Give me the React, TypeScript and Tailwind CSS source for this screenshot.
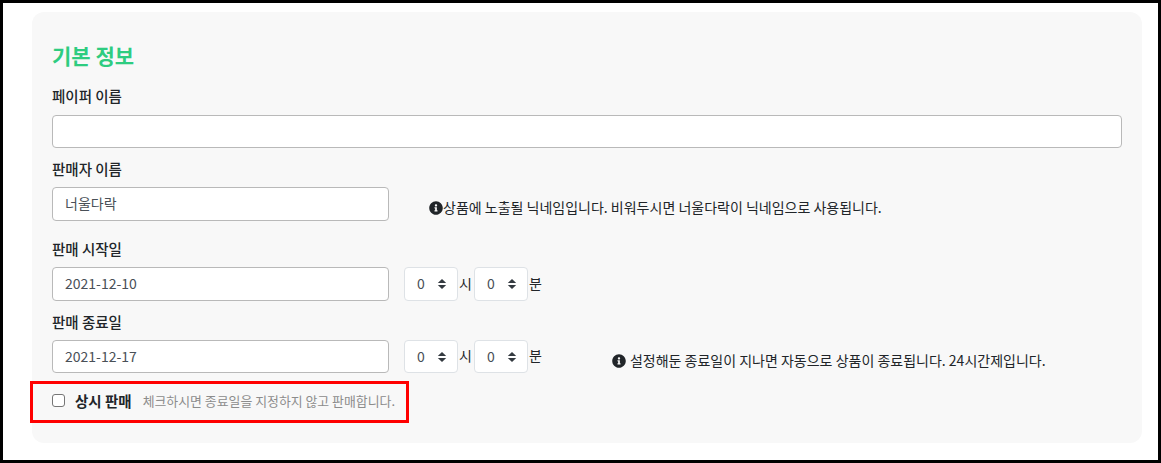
import React from "react";

const font = { fontFamily: '"Noto Sans CJK KR", "Noto Sans", sans-serif' };

function InfoIcon() {
  return (
    <svg viewBox="0 0 512 512" className="w-[14px] h-[14px] shrink-0" fill="#212529">
      <path d="M256 8C119 8 8 119 8 256s111 248 248 248 248-111 248-248S393 8 256 8zm0 110c23.2 0 42 18.800 42 42s-18.800 42-42 42-42-18.800-42-42 18.800-42 42-42zm56 254c0 6.600-5.400 12-12 12h-88c-6.600 0-12-5.400-12-12v-24c0-6.600 5.400-12 12-12h12v-64h-12c-6.600 0-12-5.400-12-12v-24c0-6.600 5.400-12 12-12h64c6.600 0 12 5.400 12 12v100h12c6.600 0 12 5.400 12 12v24z" />
    </svg>
  );
}

function Arrows() {
  return (
    <svg viewBox="0 0 16 16" className="w-[16px] h-[16px]" fill="#343a40">
      <path d="M3.800 7 8 3l4.200 4z" />
      <path d="M3.800 9 8 13l4.200-4z" />
    </svg>
  );
}

function TimeSelect({ short }: { short?: boolean }) {
  return (
    <div className={`w-[54px] ${short ? "h-[33px]" : "h-[34px]"} bg-white border border-[#dee2e6] rounded-[4px] flex items-center justify-between pl-[12px] pr-[7px] text-[14px] text-[#495057]`}>
      <span className={short ? "mt-0" : "-mt-[1px]"}>0</span>
      <Arrows />
    </div>
  );
}

function TextField({ value, className }: { value?: string; className: string }) {
  return (
    <div className={`bg-white border border-[#b9b9b9] rounded-[4px] flex items-center px-[12px] text-[14px] text-[#495057] ${className}`}>
      {value}
    </div>
  );
}

function Label({ children }: { children: React.ReactNode }) {
  return <div className="h-[21px] leading-[21px] text-[14.5px] font-medium text-[#212529]">{children}</div>;
}

function TimeGroup({ short }: { short?: boolean }) {
  return (
    <div className="flex items-center ml-[15px] text-[14px] text-[#212529]">
      <TimeSelect short={short} />
      <span className="w-[16px] pl-[1px] -mt-[2px]">시</span>
      <TimeSelect short={short} />
      <span className="pl-[1px] -mt-[2px]">분</span>
    </div>
  );
}

export default function App() {
  return (
    <div style={font} className="w-[1161px] h-[463px] bg-white border-[3px] border-black overflow-hidden">
      <div className="relative mt-[9px] ml-[29px] w-[1110px] h-[431px] bg-[#f8f8f8] rounded-[12px] pl-[20px] pr-[20px] pt-[28px]">
        <h2 className="h-[30px] leading-[30px] text-[21px] font-bold text-[#2ecc80]">기본 정보</h2>
        <div className="mt-[15px]">
          <Label>페이퍼 이름</Label>
        </div>
        <TextField className="mt-[9px] w-full h-[33px]" />
        <div className="mt-[10px]">
          <Label>판매자 이름</Label>
        </div>
        <div className="mt-[8px] flex items-center">
          <TextField value="너울다락" className="w-[337px] h-[34px] pb-[2px]" />
          <div className="ml-[40px] mt-[7px] flex items-center text-[14px] text-[#212529]">
            <InfoIcon />
            <span>상품에 노출될 닉네임입니다. 비워두시면 너울다락이 닉네임으로 사용됩니다.</span>
          </div>
        </div>
        <div className="mt-[17px]">
          <Label>판매 시작일</Label>
        </div>
        <div className="mt-[8px] flex items-center">
          <TextField value="2021-12-10" className="w-[337px] h-[34px] pb-[2px]" />
          <TimeGroup />
        </div>
        <div className="mt-[10px]">
          <Label>판매 종료일</Label>
        </div>
        <div className="mt-[8px] flex items-center">
          <TextField value="2021-12-17" className="w-[337px] h-[33px]" />
          <TimeGroup short />
          <div className="ml-[70px] mt-[8px] flex items-center gap-[4px] text-[14px] text-[#212529]">
            <InfoIcon />
            <span>설정해둔 종료일이 지나면 자동으로 상품이 종료됩니다. 24시간제입니다.</span>
          </div>
        </div>
        <div className="mt-[17px] flex items-center h-[21px]">
          <span className="w-[13px] h-[13px] bg-white border border-[#767676] rounded-[3px]" />
          <span className="ml-[10px] mt-[1px] text-[14.5px] font-bold text-[#212529]">상시 판매</span>
          <span className="ml-[11px] mt-[1px] text-[12.9px] text-[#8c8c8c]">체크하시면 종료일을 지정하지 않고 판매합니다.</span>
        </div>
        <div className="absolute left-[-2px] top-[369px] w-[379px] h-[42px] border-[3px] border-[#ff0000]" />
      </div>
    </div>
  );
}
